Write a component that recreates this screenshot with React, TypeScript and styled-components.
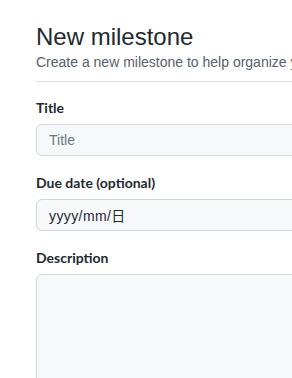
import React from "react";
import styled, { createGlobalStyle } from "styled-components";

const Global = createGlobalStyle`
  html, body {
    margin: 0;
    padding: 0;
    background: #ffffff;
    overflow: hidden;
  }
  body {
    font-family: "Liberation Sans", "Noto Sans CJK SC", sans-serif;
    color: #24292f;
  }
  * { box-sizing: border-box; }
`;

const Page = styled.div`
  width: 560px;
  padding: 21px 0 0 36px;
`;

const Header = styled.div`
  display: flex;
  flex-direction: column;
  padding-bottom: 9px;
  border-bottom: 1px solid #d8dee4;
  margin-bottom: 16px;
`;

const Heading = styled.h1`
  margin: 0;
  font-size: 24px;
  line-height: 31px;
  font-weight: 400;
  color: #24292f;
`;

const Subtitle = styled.p`
  margin: 0;
  font-size: 14px;
  line-height: 20px;
  color: #57606a;
  white-space: nowrap;
`;

const Form = styled.form`
  display: flex;
  flex-direction: column;
  gap: 17px;
`;

const Field = styled.div`
  display: flex;
  flex-direction: column;
  gap: 6px;
`;

const Label = styled.label`
  font-family: "Lato", "Liberation Sans", sans-serif;
  font-size: 14px;
  line-height: 20px;
  font-weight: 700;
  color: #24292f;
`;

const TextInput = styled.input<{ $spaced?: boolean }>`
  height: 32px;
  width: 100%;
  padding: 5px 12px;
  font-family: inherit;
  font-size: 14px;
  line-height: 20px;
  letter-spacing: ${(p) => (p.$spaced ? "0.4px" : "normal")};
  color: #24292f;
  background: #f6f8fa;
  border: 1px solid #d0d7de;
  border-radius: 6px;
  outline: none;
  &::placeholder {
    color: #6e7781;
  }
`;

const TextArea = styled.textarea`
  height: 200px;
  width: 100%;
  padding: 8px 12px;
  font-family: inherit;
  font-size: 14px;
  background: #f6f8fa;
  border: 1px solid #d0d7de;
  border-radius: 6px;
  resize: none;
  outline: none;
`;

export default function App() {
  return (
    <>
      <Global />
      <Page>
        <Header>
          <Heading>New milestone</Heading>
          <Subtitle>Create a new milestone to help organize your issues and pull requests.</Subtitle>
        </Header>
        <Form>
          <Field>
            <Label htmlFor="title">Title</Label>
            <TextInput id="title" placeholder="Title" />
          </Field>
          <Field>
            <Label htmlFor="due">Due date (optional)</Label>
            <TextInput id="due" type="text" readOnly value="yyyy/mm/日" $spaced />
          </Field>
          <Field>
            <Label htmlFor="desc">Description</Label>
            <TextArea id="desc" />
          </Field>
        </Form>
      </Page>
    </>
  );
}
